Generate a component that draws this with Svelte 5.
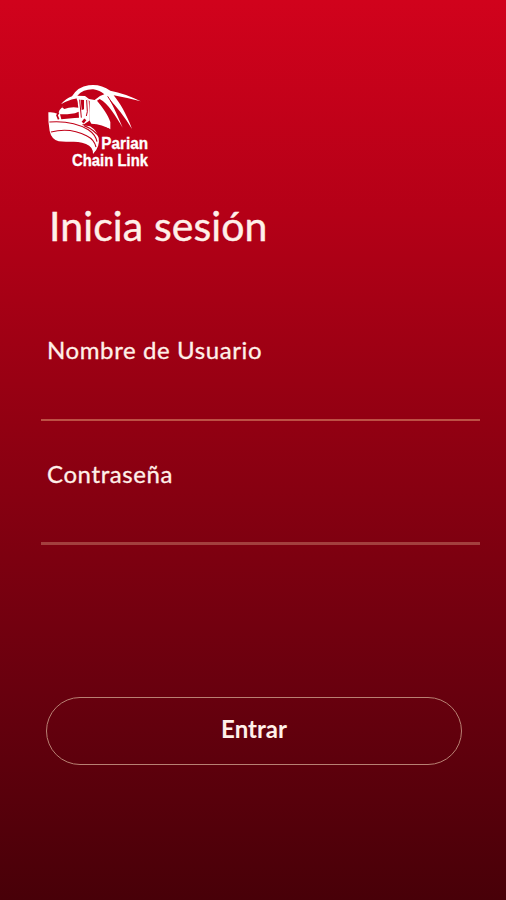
<script>
  let username = $state('');
  let password = $state('');
</script>

<main class="screen">
  <svg class="logo" viewBox="0 0 348 294" role="img" aria-label="Parian Chain Link">
    <g fill="#fff">
      <path d="M25 103 Q40 101 54 108 Q57 94 68 86 L90 80 L114 78 L125 125 L128 142 L150 145 Q171 158 176 179 Q181 205 159 228 Q160 207 138 198 C112 187 81 193 56 190 Q34 184 29 159 Q24 132 25 103Z" />
      <path d="M110 60 L130 56 L146 67 L149 105 L148 128 L132 139 L121 137Z" />
      <path d="M63 79 Q78 61 96 55 Q114 26 146 22 Q181 17 211 38 Q255 46 302 70 Q264 60 221 52 C239 74 259 107 276 153 Q242 98 208 64 C223 91 235 119 248 149 C227 114 205 77 179 63 L171 68 C187 87 205 111 211 132 L211 154 Q188 139 154 137 L148 126 L149 69 L132 59 Q92 60 63 79Z" />
    </g>
    <g fill="none" stroke="#c10018">
      <path d="M112 53 Q130 33 160 34 Q180 37 193 49 L180 54 L164 66 L147 63 L135 54Z" fill="#c10018" stroke="none" />
      <path d="M75 80 Q92 69 112 67 L115 89 Q91 86 73 93 L66 88Z" fill="#c10018" stroke="none" />
      <path d="M60 109 L82 109 L105 106 L116 101 L117 119 L104 120 L64 124Z" fill="#c10018" stroke="none" />
      <path d="M56 104 L51 112 L56 124" stroke-width="5" />
      <path d="M119 65 L124 119" stroke-width="3" />
      <path d="M122 65 L132 66 L132 94 L125 96Z" fill="#c10018" stroke="none" />
      <path d="M140 66 L142 101 L139 114" stroke-width="3" />
      <path d="M136 124 L128 134" stroke-width="8" />
      <path d="M28 132 C66 129 111 135 145 155 Q167 170 171 191" stroke-width="3.5" />
      <path d="M33 162 C68 153 109 157 141 174 Q163 185 168 207" stroke-width="3.5" />
      <path d="M132 143 Q164 155 181 181" stroke-width="3.5" />
      <path d="M151 139 Q171 143 208 153" stroke-width="3" />
      <path d="M203 55 Q230 91 252 139" stroke-width="3" />
    </g>
    <g class="wordmark" fill="#fff" stroke="#fff" stroke-width="1">
      <text x="184" y="213" textLength="140" lengthAdjust="spacingAndGlyphs">Parian</text>
      <text x="96" y="265" textLength="228" lengthAdjust="spacingAndGlyphs">Chain Link</text>
    </g>
  </svg>

  <h1>Inicia sesión</h1>

  <form onsubmit={(e) => e.preventDefault()}>
    <label class="field">
      <span class="user">Nombre de Usuario</span>
      <input type="text" bind:value={username} autocomplete="username" />
    </label>
    <label class="field second">
      <span class="pass">Contraseña</span>
      <input type="password" bind:value={password} autocomplete="current-password" />
    </label>
    <button type="submit">Entrar</button>
  </form>
</main>

<style>
  :global(body) {
    margin: 0;
  }
  .screen {
    box-sizing: border-box;
    height: 900px;
    padding: 78px 26px 0 40px;
    overflow: hidden;
    background: linear-gradient(180deg, #d1021c 0%, #b40017 24%, #920012 47%, #68000e 77%, #480008 100%);
    color: #fff0e9;
    font-family: Lato, 'Open Sans', sans-serif;
  }
  .logo {
    display: block;
    width: 116px;
    height: 98px;
  }
  .wordmark {
    font-family: 'Liberation Sans', sans-serif;
    font-size: 49px;
    font-weight: 700;
  }
  h1 {
    margin: 26px 0 0 9px;
    font-size: 41px;
    line-height: 48px;
    font-weight: 400;
    letter-spacing: 0.1px;
    -webkit-text-stroke: 0.4px currentColor;
  }
  form {
    display: flex;
    flex-direction: column;
    margin-top: 84px;
  }
  .field {
    display: flex;
    flex-direction: column;
    margin-left: 1px;
    height: 85px;
    border-bottom: 2px solid #bd5145;
  }
  .second {
    height: 84px;
    margin-top: 37px;
    border-bottom-width: 3px;
    border-color: #a33f3e;
  }
  .field span {
    padding-left: 6px;
    font-size: 24px;
    line-height: 32px;
    white-space: nowrap;
    letter-spacing: 0.6px;
    -webkit-text-stroke: 0.3px currentColor;
  }
  input {
    flex: 1;
    min-height: 0;
    padding: 0 6px;
    border: 0;
    outline: 0;
    background: transparent;
    color: inherit;
    font: 22px Lato, sans-serif;
  }
  button {
    height: 68px;
    margin: 152px 18px 0 6px;
    padding: 0 0 5px;
    border: 1px solid #b88073;
    border-radius: 34px;
    background: transparent;
    color: inherit;
    font: 700 24px Lato, sans-serif;
  }
</style>
